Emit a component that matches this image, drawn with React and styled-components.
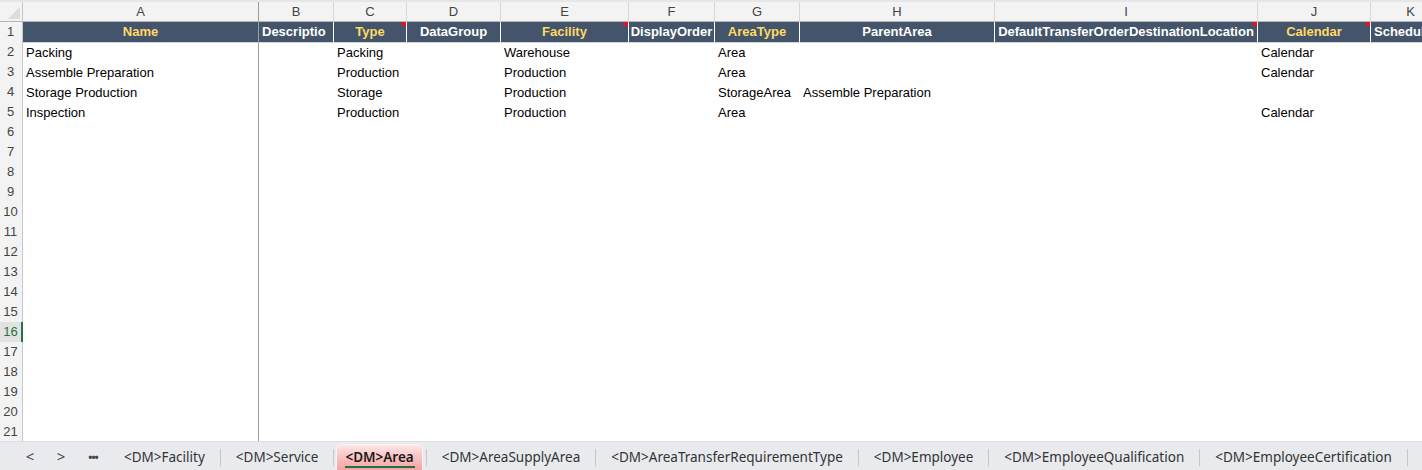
import React from 'react';
import styled, { createGlobalStyle } from 'styled-components';

const GlobalStyle = createGlobalStyle`
  html, body {
    margin: 0;
    padding: 0;
    background: #fff;
  }
  body {
    font-family: "Liberation Sans", Arial, sans-serif;
  }
`;

const COLS = [
  { letter: 'A', width: 236, title: 'Name', accent: true },
  { letter: 'B', width: 75, title: 'Descriptio', clip: true },
  { letter: 'C', width: 73, title: 'Type', accent: true, note: true },
  { letter: 'D', width: 94, title: 'DataGroup' },
  { letter: 'E', width: 128, title: 'Facility', accent: true, note: true },
  { letter: 'F', width: 86, title: 'DisplayOrder' },
  { letter: 'G', width: 85, title: 'AreaType', accent: true },
  { letter: 'H', width: 195, title: 'ParentArea' },
  { letter: 'I', width: 263, title: 'DefaultTransferOrderDestinationLocation', note: true },
  { letter: 'J', width: 113, title: 'Calendar', accent: true, note: true },
  { letter: 'K', width: 80, title: 'Schedul', clip: true },
];

const DATA = [
  ['Packing', '', 'Packing', '', 'Warehouse', '', 'Area', '', '', 'Calendar', ''],
  ['Assemble Preparation', '', 'Production', '', 'Production', '', 'Area', '', '', 'Calendar', ''],
  ['Storage Production', '', 'Storage', '', 'Production', '', 'StorageArea', 'Assemble Preparation', '', '', ''],
  ['Inspection', '', 'Production', '', 'Production', '', 'Area', '', '', 'Calendar', ''],
];

const TABS = [
  '<DM>Facility',
  '<DM>Service',
  '<DM>Area',
  '<DM>AreaSupplyArea',
  '<DM>AreaTransferRequirementType',
  '<DM>Employee',
  '<DM>EmployeeQualification',
  '<DM>EmployeeCertification',
];
const ACTIVE = '<DM>Area';

const template = `23px ${COLS.map(c => `${c.width}px`).join(' ')}`;

const Sheet = styled.div`
  width: 1422px;
  height: 470px;
  display: flex;
  flex-direction: column;
  overflow: hidden;
  background: #fff;
`;

const TopStrip = styled.div`
  height: 2px;
  background: #e6e6e6;
`;

const Grid = styled.div`
  flex: 1;
  display: flex;
  flex-direction: column;
  overflow: hidden;
`;

const Row = styled.div`
  display: grid;
  grid-template-columns: ${template};
  height: 20px;
  flex-shrink: 0;
`;

const Corner = styled.div`
  position: relative;
  background: #f3f3f3;
  border-right: 1px solid #c8c8c8;
  border-bottom: 1px solid #b5b5b5;
  box-sizing: border-box;

  &::after {
    content: '';
    position: absolute;
    right: 2px;
    bottom: 2px;
    border-style: solid;
    border-width: 0 0 12px 12px;
    border-color: transparent transparent #dcdcdc transparent;
  }
`;

const Letter = styled.div`
  background: #f3f3f3;
  border-right: 1px solid ${p => (p.$freeze ? '#9e9e9e' : '#d8d8d8')};
  border-bottom: 1px solid #b5b5b5;
  box-sizing: border-box;
  color: #444;
  font-size: 13px;
  line-height: 19px;
  text-align: center;
  overflow: hidden;
  white-space: nowrap;
`;

const RowNum = styled.div`
  background: ${p => (p.$active ? '#e2e2e2' : '#f3f3f3')};
  border-right: ${p => (p.$active ? '2px solid #217346' : '1px solid #c8c8c8')};
  border-bottom: 1px solid #dadada;
  box-sizing: border-box;
  color: ${p => (p.$active ? '#217346' : '#444')};
  font-size: 13px;
  line-height: 20px;
  text-align: center;
  padding-right: ${p => (p.$active ? '0' : '1px')};
`;

const HeadCell = styled.div`
  position: relative;
  background: #44546a;
  border-right: 1px solid ${p => (p.$freeze ? '#9e9e9e' : '#fff')};
  border-bottom: 1px solid #d0d4da;
  box-sizing: border-box;
  color: ${p => (p.$accent ? '#ffd966' : '#fff')};
  font-size: 13px;
  font-weight: bold;
  line-height: 20px;
  text-align: ${p => (p.$clip ? 'left' : 'center')};
  padding-left: ${p => (p.$clip ? '3px' : '0')};
  white-space: nowrap;
  overflow: hidden;

  &::after {
    content: '';
    display: ${p => (p.$note ? 'block' : 'none')};
    position: absolute;
    top: 0;
    right: 0;
    border-style: solid;
    border-width: 0 6px 6px 0;
    border-color: transparent #e81123 transparent transparent;
  }
`;

const Cell = styled.div`
  border-right: ${p => (p.$freeze ? '1px solid #9e9e9e' : 'none')};
  box-sizing: border-box;
  color: #000;
  font-size: 13px;
  line-height: 21px;
  padding-left: 3px;
  white-space: nowrap;
  overflow: visible;
`;

const TabBar = styled.div`
  height: 29px;
  flex-shrink: 0;
  display: flex;
  align-items: center;
  background: #e8eaee;
  border-top: 1px solid #dcdee2;
  box-sizing: border-box;
  font-family: "Noto Sans", "Open Sans", sans-serif;
  font-size: 13.5px;
  color: #333;
  white-space: nowrap;
  overflow: hidden;
`;

const NavBtn = styled.div`
  flex-shrink: 0;
  width: ${p => p.$w}px;
  text-align: center;
  color: #444;
  font-size: ${p => (p.$dots ? '11px' : '15px')};
  font-weight: ${p => (p.$dots ? 'bold' : 'normal')};
  letter-spacing: ${p => (p.$dots ? '-1px' : '0')};
`;

const Tab = styled.div`
  position: relative;
  flex-shrink: 0;
  height: 25px;
  margin-top: 2px;
  display: flex;
  align-items: center;
  padding: 0 ${p => (p.$active ? '8px' : '15px')};
  border-radius: 4px 4px 0 0;
  background: ${p =>
    p.$active ? 'linear-gradient(to bottom, #fde6e6 0%, #f9baba 60%, #f5a4a4 100%)' : 'transparent'};
  box-shadow: ${p => (p.$active ? '0 0 0 1px #f6f6f6' : 'none')};
  color: ${p => (p.$active ? '#1a1a1a' : '#333')};
  font-weight: ${p => (p.$active ? 600 : 'normal')};
  margin-left: ${p => (p.$active ? '3px' : '0')};
  margin-right: ${p => (p.$active ? '4px' : '0')};

  &::after {
    content: '';
    display: ${p => (p.$active ? 'block' : 'none')};
    position: absolute;
    left: 8px;
    right: 7px;
    bottom: 2px;
    height: 2px;
    background: #217346;
  }
`;

const Sep = styled.div`
  flex-shrink: 0;
  width: 1px;
  height: 17px;
  background: #c4c6ca;
  margin-top: 2px;
`;

export default function App() {
  const rows = [];
  for (let r = 2; r <= 21; r++) {
    const data = DATA[r - 2];
    rows.push(
      <Row key={r}>
        <RowNum $active={r === 16}>{r}</RowNum>
        {COLS.map((c, i) => (
          <Cell key={c.letter} $freeze={i === 0}>
            {data ? data[i] : ''}
          </Cell>
        ))}
      </Row>
    );
  }

  return (
    <>
      <GlobalStyle />
      <Sheet>
        <TopStrip />
        <Grid>
          <Row>
            <Corner />
            {COLS.map((c, i) => (
              <Letter key={c.letter} $freeze={i === 0}>{c.letter}</Letter>
            ))}
          </Row>
          <Row>
            <RowNum>1</RowNum>
            {COLS.map((c, i) => (
              <HeadCell
                key={c.letter}
                $accent={c.accent}
                $note={c.note}
                $clip={c.clip}
                $freeze={i === 0}
              >
                {c.title}
              </HeadCell>
            ))}
          </Row>
          {rows}
        </Grid>
        <TabBar>
          <NavBtn $w={15} />
          <NavBtn $w={30}>&lt;</NavBtn>
          <NavBtn $w={32}>&gt;</NavBtn>
          <NavBtn $w={32} $dots>•••</NavBtn>
          {TABS.map((t, i) => (
            <React.Fragment key={t}>
              {i > 0 && <Sep />}
              <Tab $active={t === ACTIVE}>{t}</Tab>
            </React.Fragment>
          ))}
          <Sep />
        </TabBar>
      </Sheet>
    </>
  );
}
